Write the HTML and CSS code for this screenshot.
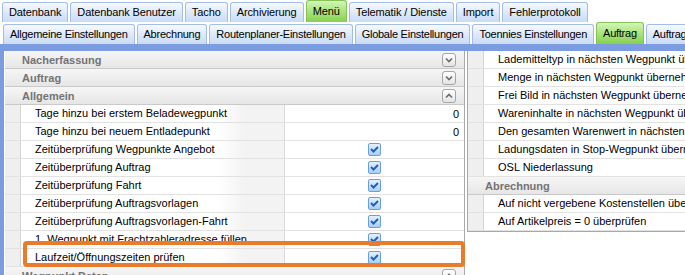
FILE: index.html
```html
<!DOCTYPE html>
<html lang="de">
<head>
    <meta charset="UTF-8">
    <title>Einstellungen - Auftrag</title>
    <link rel="stylesheet" href="styles.css">
</head>
<body>
    <div class="tabbar">
        <div class="tab">Datenbank</div>
        <div class="tab">Datenbank Benutzer</div>
        <div class="tab">Tacho</div>
        <div class="tab">Archivierung</div>
        <div class="tab active">Menü</div>
        <div class="tab">Telematik / Dienste</div>
        <div class="tab">Import</div>
        <div class="tab">Fehlerprotokoll</div>
    </div>
    <div class="tabbar sub">
        <div class="tab">Allgemeine Einstellungen</div>
        <div class="tab">Abrechnung</div>
        <div class="tab">Routenplaner-Einstellungen</div>
        <div class="tab">Globale Einstellungen</div>
        <div class="tab">Toennies Einstellungen</div>
        <div class="tab active">Auftrag</div>
        <div class="tab">Auftragsvorlagen</div>
    </div>

    <div class="main">
        <div class="grid grid-left">
            <div class="cat">
                <span>Nacherfassung</span>
                <span class="toggle"><svg viewBox="0 0 12 12"><path d="M3 4.5l3 3 3-3"/></svg></span>
            </div>
            <div class="cat">
                <span>Auftrag</span>
                <span class="toggle"><svg viewBox="0 0 12 12"><path d="M3 4.5l3 3 3-3"/></svg></span>
            </div>
            <div class="cat">
                <span>Allgemein</span>
                <span class="toggle"><svg viewBox="0 0 12 12"><path d="M3 7.5l3-3 3 3"/></svg></span>
            </div>
            <div class="row">
                <div class="gutter"></div>
                <div class="label">Tage hinzu bei erstem Beladewegpunkt</div>
                <div class="value num">0</div>
            </div>
            <div class="row">
                <div class="gutter"></div>
                <div class="label">Tage hinzu bei neuem Entladepunkt</div>
                <div class="value num">0</div>
            </div>
            <div class="row">
                <div class="gutter"></div>
                <div class="label">Zeitüberprüfung Wegpunkte Angebot</div>
                <div class="value"><span class="check"><svg viewBox="0 0 11 11"><path d="M2 5l2.5 2.5 4.5-4.5"/></svg></span></div>
            </div>
            <div class="row">
                <div class="gutter"></div>
                <div class="label">Zeitüberprüfung Auftrag</div>
                <div class="value"><span class="check"><svg viewBox="0 0 11 11"><path d="M2 5l2.5 2.5 4.5-4.5"/></svg></span></div>
            </div>
            <div class="row">
                <div class="gutter"></div>
                <div class="label">Zeitüberprüfung Fahrt</div>
                <div class="value"><span class="check"><svg viewBox="0 0 11 11"><path d="M2 5l2.5 2.5 4.5-4.5"/></svg></span></div>
            </div>
            <div class="row">
                <div class="gutter"></div>
                <div class="label">Zeitüberprüfung Auftragsvorlagen</div>
                <div class="value"><span class="check"><svg viewBox="0 0 11 11"><path d="M2 5l2.5 2.5 4.5-4.5"/></svg></span></div>
            </div>
            <div class="row">
                <div class="gutter"></div>
                <div class="label">Zeitüberprüfung Auftragsvorlagen-Fahrt</div>
                <div class="value"><span class="check"><svg viewBox="0 0 11 11"><path d="M2 5l2.5 2.5 4.5-4.5"/></svg></span></div>
            </div>
            <div class="row">
                <div class="gutter"></div>
                <div class="label">1. Wegpunkt mit Frachtzahleradresse füllen</div>
                <div class="value"><span class="check"><svg viewBox="0 0 11 11"><path d="M2 5l2.5 2.5 4.5-4.5"/></svg></span></div>
            </div>
            <div class="row">
                <div class="gutter"></div>
                <div class="label">Laufzeit/Öffnungszeiten prüfen</div>
                <div class="value"><span class="check"><svg viewBox="0 0 11 11"><path d="M2 5l2.5 2.5 4.5-4.5"/></svg></span></div>
            </div>
            <div class="cat">
                <span>Wegpunkt Daten</span>
                <span class="toggle"><svg viewBox="0 0 12 12"><path d="M3 7.5l3-3 3 3"/></svg></span>
            </div>
        </div>

        <div class="grid grid-right">
            <div class="row"><div class="gutter"></div><div class="label">Lademitteltyp in nächsten Wegpunkt übernehmen</div></div>
            <div class="row"><div class="gutter"></div><div class="label">Menge in nächsten Wegpunkt übernehmen</div></div>
            <div class="row"><div class="gutter"></div><div class="label">Frei Bild in nächsten Wegpunkt übernehmen</div></div>
            <div class="row"><div class="gutter"></div><div class="label">Wareninhalte in nächsten Wegpunkt übernehmen</div></div>
            <div class="row"><div class="gutter"></div><div class="label">Den gesamten Warenwert in nächsten Wegpunkt übernehmen</div></div>
            <div class="row"><div class="gutter"></div><div class="label">Ladungsdaten in Stop-Wegpunkt übernehmen</div></div>
            <div class="row"><div class="gutter"></div><div class="label">OSL Niederlassung</div></div>
            <div class="cat"><span>Abrechnung</span></div>
            <div class="row"><div class="gutter"></div><div class="label">Auf nicht vergebene Kostenstellen überprüfen</div></div>
            <div class="row"><div class="gutter"></div><div class="label">Auf Artikelpreis = 0 überprüfen</div></div>
        </div>
    </div>

    <!-- annotation frame drawn over the grid -->
    <div class="highlight"></div>
</body>
</html>
```

FILE: styles.css
```css
body {
    margin: 0;
    font-family: 'Liberation Sans', Arial, sans-serif;
    font-size: 11px;
    color: #000;
    background: #fff;
    overflow: hidden;
    position: relative;
    height: 275px;
}
.tabbar {
    display: flex;
    align-items: flex-end;
    gap: 2px;
    height: 22px;
    padding-left: 2px;
    white-space: nowrap;
    letter-spacing: -0.1px;
}
.tabbar.sub {
    padding-left: 3px;
    letter-spacing: -0.25px;
}
.tab {
    height: 19px;
    line-height: 19px;
    padding: 0 6px;
    border: 1px solid #a3bde6;
    border-bottom: none;
    border-radius: 3px 3px 0 0;
    background: linear-gradient(#f7faff 0%, #e0ebfa 45%, #c9dbf5 100%);
}
.tab.active {
    height: 21px;
    line-height: 21px;
    border-color: #86c45a;
    background: linear-gradient(#d3f5b5 0%, #a8e47c 50%, #86d14f 100%);
}
.main {
    display: flex;
    align-items: flex-start;
    border-top: 7px solid #7c9ce2;
}
.grid {
    background: #fff;
}
.grid-left {
    width: 459px;
    border-left: 4px solid #7c9ce2;
    border-right: 1px solid #a8a8a8;
    padding-left: 1px;
}
.grid-right {
    flex: 1;
    margin-left: 2px;
    border-left: 1px solid #a8a8a8;
    border-bottom: 1px solid #a8a8a8;
    overflow: hidden;
}
.cat {
    display: flex;
    align-items: center;
    justify-content: space-between;
    box-sizing: border-box;
    height: 18px;
    padding: 0 8px 0 17px;
    border-bottom: 1px solid #c9c9c9;
    background: linear-gradient(#f6f6f6, #e6e6e6);
    color: #737373;
    font-weight: bold;
}
.toggle {
    display: flex;
    width: 12px;
    height: 12px;
    border: 1px solid #a5a5a5;
    border-radius: 3px;
    background: linear-gradient(#ffffff, #e4e4e4);
}
.toggle svg {
    width: 12px;
    height: 12px;
    fill: none;
    stroke: #6b6b6b;
    stroke-width: 1.6;
}
.row {
    display: flex;
    box-sizing: border-box;
    height: 18px;
    border-bottom: 1px solid #e2e2e2;
}
.gutter {
    width: 15px;
    flex-shrink: 0;
    background: #efefef;
    border-right: 1px solid #d4d4d4;
}
.label {
    width: 249px;
    flex-shrink: 0;
    padding-left: 14px;
    line-height: 17px;
    white-space: nowrap;
    overflow: hidden;
    border-right: 1px solid #dadada;
    background: linear-gradient(to right, #fff 75%, #f3f3f3 85%);
}
.grid-right .label {
    width: auto;
    border-right: none;
    background: #fff;
}
.value {
    flex: 1;
    display: flex;
    align-items: center;
    justify-content: center;
}
.value.num {
    justify-content: flex-end;
    padding-right: 5px;
}
.check {
    display: flex;
    width: 11px;
    height: 11px;
    border: 1px solid #6a9ee4;
    border-radius: 2px;
    background: linear-gradient(#e4f0ff, #a9cff7);
}
.check svg {
    width: 11px;
    height: 11px;
    fill: none;
    stroke: #1e5fc4;
    stroke-width: 2;
}
.highlight {
    position: absolute;
    left: 23px;
    top: 241px;
    width: 434px;
    height: 18px;
    border: 4.5px solid #ea7b2a;
    border-radius: 4px;
}
```
